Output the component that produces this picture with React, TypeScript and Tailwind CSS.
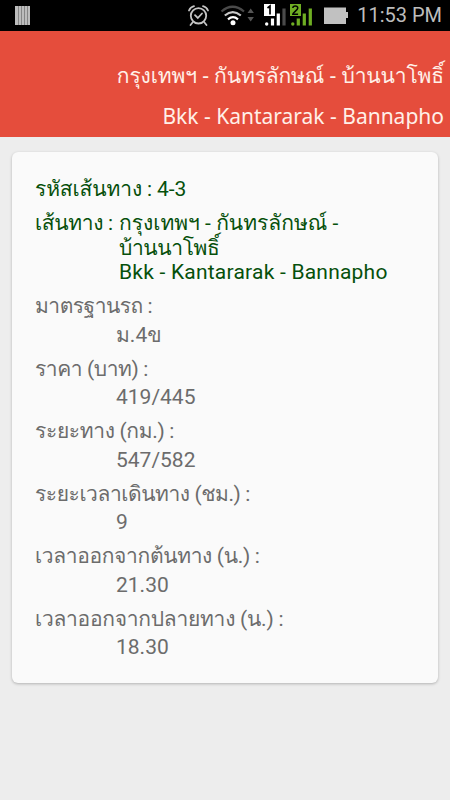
import React from 'react';

type Detail = { label: string; value: string; tracking: string };

const details: Detail[] = [
  { label: 'มาตรฐานรถ :', value: 'ม.4ข', tracking: 'tracking-[-0.5px]' },
  { label: 'ราคา (บาท) :', value: '419/445', tracking: 'tracking-[-0.42px]' },
  { label: 'ระยะทาง (กม.) :', value: '547/582', tracking: 'tracking-[-0.34px]' },
  { label: 'ระยะเวลาเดินทาง (ชม.) :', value: '9', tracking: 'tracking-[-0.44px]' },
  { label: 'เวลาออกจากต้นทาง (น.) :', value: '21.30', tracking: 'tracking-[-0.35px]' },
  { label: 'เวลาออกจากปลายทาง (น.) :', value: '18.30', tracking: 'tracking-[-0.26px]' },
];

const StatusBar: React.FC = () => (
  <div className="flex h-[31px] items-center justify-between bg-black pl-[15px] pr-[8px]">
    <svg width="15" height="19" viewBox="0 0 15 19">
      <rect width="15" height="19" fill="#bdbdbd" />
      <path d="M3.5 0v19M6.5 0v19M9.5 0v19M12.5 0v19" stroke="#777" strokeWidth="0.8" />
    </svg>
    <div className="flex items-center">
      {/* alarm, wifi, two SIMs, battery */}
      <svg width="164" height="31" viewBox="186 0 164 31" fill="none">
        <g stroke="#c4c4c4" strokeWidth="1.8" strokeLinecap="round">
          <circle cx="199.5" cy="15.8" r="7.7" />
          <path d="M190 10.5q1.5-3.5 5-4.3M204 6.200q3.5.8 5 4.3M193.5 22.5l-2 2.5M205.5 22.5l2 2.5" />
          <path d="M196 15.2l2.8 2.8 4.2-4.5" />
        </g>
        <path d="M222.5 11.5q11-9.5 22.5 0" stroke="#4a4a4a" strokeWidth="2.2" />
        <path d="M225.8 15.5q8-6.8 16 0" stroke="#c8c8c8" strokeWidth="2.2" />
        <path d="M229 19.3q5-4.3 10 0" stroke="#fff" strokeWidth="2.2" />
        <circle cx="234" cy="22.7" r="2.5" fill="#fff" />
        <path d="M248.5 13l3.2-4.5 3.2 4.500zM248.5 17l3.2 4.5 3.2-4.500z" fill="#555" />
        <rect x="265" y="4" width="11" height="12" fill="#fff" />
        <path d="M268.5 8l2.5-2v8.5" stroke="#000" strokeWidth="1.7" />
        <circle cx="267.7" cy="24" r="1.7" fill="#fff" />
        <path d="M273.5 18.500v7M279.3 13.500v12" stroke="#fff" strokeWidth="3.2" />
        <path d="M285 8.500v17" stroke="#4a4a4a" strokeWidth="3.2" />
        <rect x="291" y="4" width="11" height="12" fill="#6fae23" />
        <path d="M293.8 8q.2-2 2.5-2t2.5 2c0 2-5 4.5-5 6.300h5.3" stroke="#000" strokeWidth="1.5" />
        <circle cx="293.8" cy="24" r="1.7" fill="#6fae23" />
        <path d="M299.3 18.500v7M305.3 13.500v12M311.3 8.500v17" stroke="#6fae23" strokeWidth="3.2" />
        <path d="M325 7.500h22v4.500h2v6h-2v6h-22z" fill="#c1c1c1" />
      </svg>
      <span className="ml-[8px] text-[20px] leading-[31px] text-[#bdbdbd]">11:53 PM</span>
    </div>
  </div>
);

const App: React.FC = () => {
  return (
    <div className="min-h-screen bg-[#ededed] font-['Roboto','Waree','Loma',sans-serif]">
      <StatusBar />

      <header className="flex h-[106px] flex-col items-end bg-[#e54d3c] pr-[6px] pt-[24px] font-['Noto_Sans','Garuda','Loma',sans-serif] text-[21px] text-[#fff0e8]">
        <h1 className="h-[41px] whitespace-nowrap leading-[40px] tracking-[-0.13px]">กรุงเทพฯ - กันทรลักษณ์ - บ้านนาโพธิ์</h1>
        <p className="h-[40px] whitespace-nowrap leading-[40px]">Bkk - Kantararak - Bannapho</p>
      </header>

      <main className="mx-[12px] mt-[15px] h-[531px] rounded-[6px] bg-[#fafafa] pl-[23px] pt-[20px] text-[21px] whitespace-nowrap shadow-[0_1px_3px_rgba(0,0,0,0.25)]">
        <div className="text-[#06500b]">
          <p className="h-[34px] leading-[34px] tracking-[-0.13px]">รหัสเส้นทาง : 4-3</p>
          <div className="flex pt-[5px] leading-[24.5px]">
            <span className="w-[84px] tracking-[-0.35px]">เส้นทาง :</span>
            <p>
              กรุงเทพฯ - กันทรลักษณ์ -<br />
              <span className="tracking-[-0.4px]">บ้านนาโพธิ์</span><br />
              <span className="tracking-[0.22px]">Bkk - Kantararak - Bannapho</span>
            </p>
          </div>
        </div>
        <dl className="pt-[7.5px] text-[#6c6c6c]">
          {details.map((d) => (
            <div key={d.label} className="h-[62.5px]">
              <dt className={`h-[28.5px] leading-[28.5px] ${d.tracking}`}>{d.label}</dt>
              <dd className="h-[28.5px] pl-[81px] leading-[28.5px]">{d.value}</dd>
            </div>
          ))}
        </dl>
      </main>
    </div>
  );
};

export default App;
